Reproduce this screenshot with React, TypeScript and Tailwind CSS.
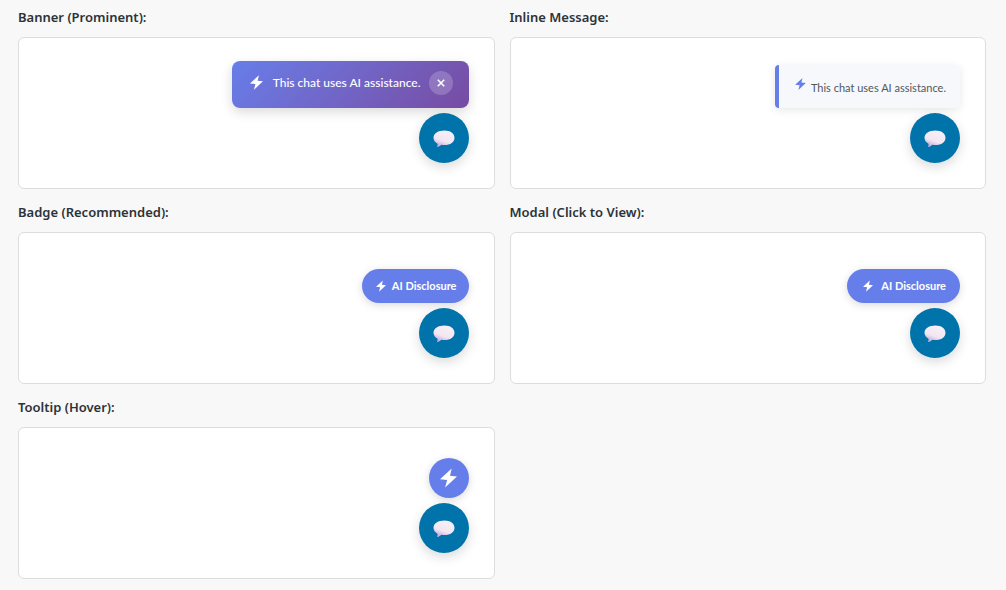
import type { ReactNode } from "react";

type IconProps = { className: string };

function Bolt({ className }: IconProps) {
  return (
    <svg viewBox="0 0 16 18" fill="currentColor" className={className} aria-hidden="true">
      <path d="M11 0 0 10.200l6.700.6L4.800 18 16 7.600l-6.600-.7z" />
    </svg>
  );
}

function ChatButton() {
  return (
    <button
      type="button"
      aria-label="Open chat"
      className="flex size-[50px] shrink-0 items-center justify-center rounded-full bg-[#0073aa] shadow-[0_4px_12px_rgba(0,0,0,0.15)]"
    >
      <svg viewBox="0 0 22 18" className="h-[18px] w-[22px]" aria-hidden="true">
        <defs>
          <linearGradient id="bubble" x1="0.7" y1="0.1" x2="0.3" y2="1">
            <stop offset="0" stopColor="#f6eff8" />
            <stop offset="0.6" stopColor="#f4e6f1" />
            <stop offset="1" stopColor="#bda6e0" />
          </linearGradient>
        </defs>
        <path
          fill="url(#bubble)"
          d="M11.500 1.500C17.200 1.500 21.500 4.300 21.500 8.700S17.500 16 11.500 16c-1.200 0-2.200-.1-3.200-.3-.8.900-1.900 1.700-3.400 2.200-.7.200-1-.2-.7-.8.400-.8.500-1.700.3-2.400C2.100 13.300.500 11.300.500 8.700c0-4.400 4.800-7.200 11-7.200z"
        />
      </svg>
    </button>
  );
}

function Preview({ title, children }: { title: string; children: ReactNode }) {
  return (
    <section>
      <h2 className="mb-[11px] font-['Noto_Sans',sans-serif] text-[13px] leading-[18px] font-semibold text-[#2c3338]">
        {title}
      </h2>
      <div className="flex h-[152px] flex-col items-end justify-end gap-[5px] rounded-md border border-[#dddddd] bg-white p-[25px]">
        {children}
        <ChatButton />
      </div>
    </section>
  );
}

export default function App() {
  return (
    <main className="min-h-screen bg-[#f8f8f8] pt-2 pr-5 pb-2 pl-[18px] font-['Lato',sans-serif]">
      <div className="grid grid-cols-2 gap-x-[15px] gap-y-[14px]">
        <Preview title="Banner (Prominent):">
          <div className="flex h-[47px] shrink-0 items-center rounded-lg bg-linear-135 from-[#667eea] to-[#764ba2] px-4 text-white shadow-[0_4px_12px_rgba(0,0,0,0.15)]">
            <Bolt className="mb-1 ml-0.5 h-[15px] w-[13px]" />
            <span className="mr-2 ml-[10px] pb-1 text-xs leading-5 font-medium">
              This chat uses AI assistance.
            </span>
            <button
              type="button"
              aria-label="Dismiss"
              className="mb-1 flex size-6 items-center justify-center rounded-full bg-white/20"
            >
              <svg viewBox="0 0 8 8" className="size-2" aria-hidden="true">
                <path d="M.8.8l6.400 6.400M7.200.8.8 7.200" stroke="currentColor" strokeWidth="1.600" />
              </svg>
            </button>
          </div>
        </Preview>

        <Preview title="Inline Message:">
          <div className="flex h-[43px] items-center rounded-sm border-l-4 border-[#667eea] bg-[#f6f8fb] pr-3.5 pl-4 text-[11px] text-[#50575e] shadow-[0_2px_8px_rgba(0,0,0,0.1)]">
            <Bolt className="mr-[5px] mb-1.5 h-3 w-[11px] text-[#667eea]" />
            <span className="pt-1">This chat uses AI assistance.</span>
          </div>
        </Preview>

        <Preview title="Badge (Recommended):">
          <div className="flex h-[34px] items-center gap-1.5 rounded-full bg-[#667eea] px-3 text-[11px] font-bold text-white shadow-[0_2px_8px_rgba(0,0,0,0.15)]">
            <Bolt className="ml-0.5 h-3 w-[10px]" />
            <span>AI Disclosure</span>
          </div>
        </Preview>

        <Preview title="Modal (Click to View):">
          <button
            type="button"
            className="flex h-[34px] items-center gap-2 rounded-full bg-[#667eea] px-3.5 text-[11px] font-bold text-white shadow-[0_2px_8px_rgba(0,0,0,0.15)]"
          >
            <Bolt className="ml-0.5 h-3 w-[10px]" />
            <span>AI Disclosure</span>
          </button>
        </Preview>

        <Preview title="Tooltip (Hover):">
          <button
            type="button"
            aria-label="AI disclosure"
            className="flex size-10 items-center justify-center rounded-full bg-[#667eea] text-white shadow-[0_2px_8px_rgba(0,0,0,0.15)]"
          >
            <Bolt className="h-5 w-[17px]" />
          </button>
        </Preview>
      </div>
    </main>
  );
}
